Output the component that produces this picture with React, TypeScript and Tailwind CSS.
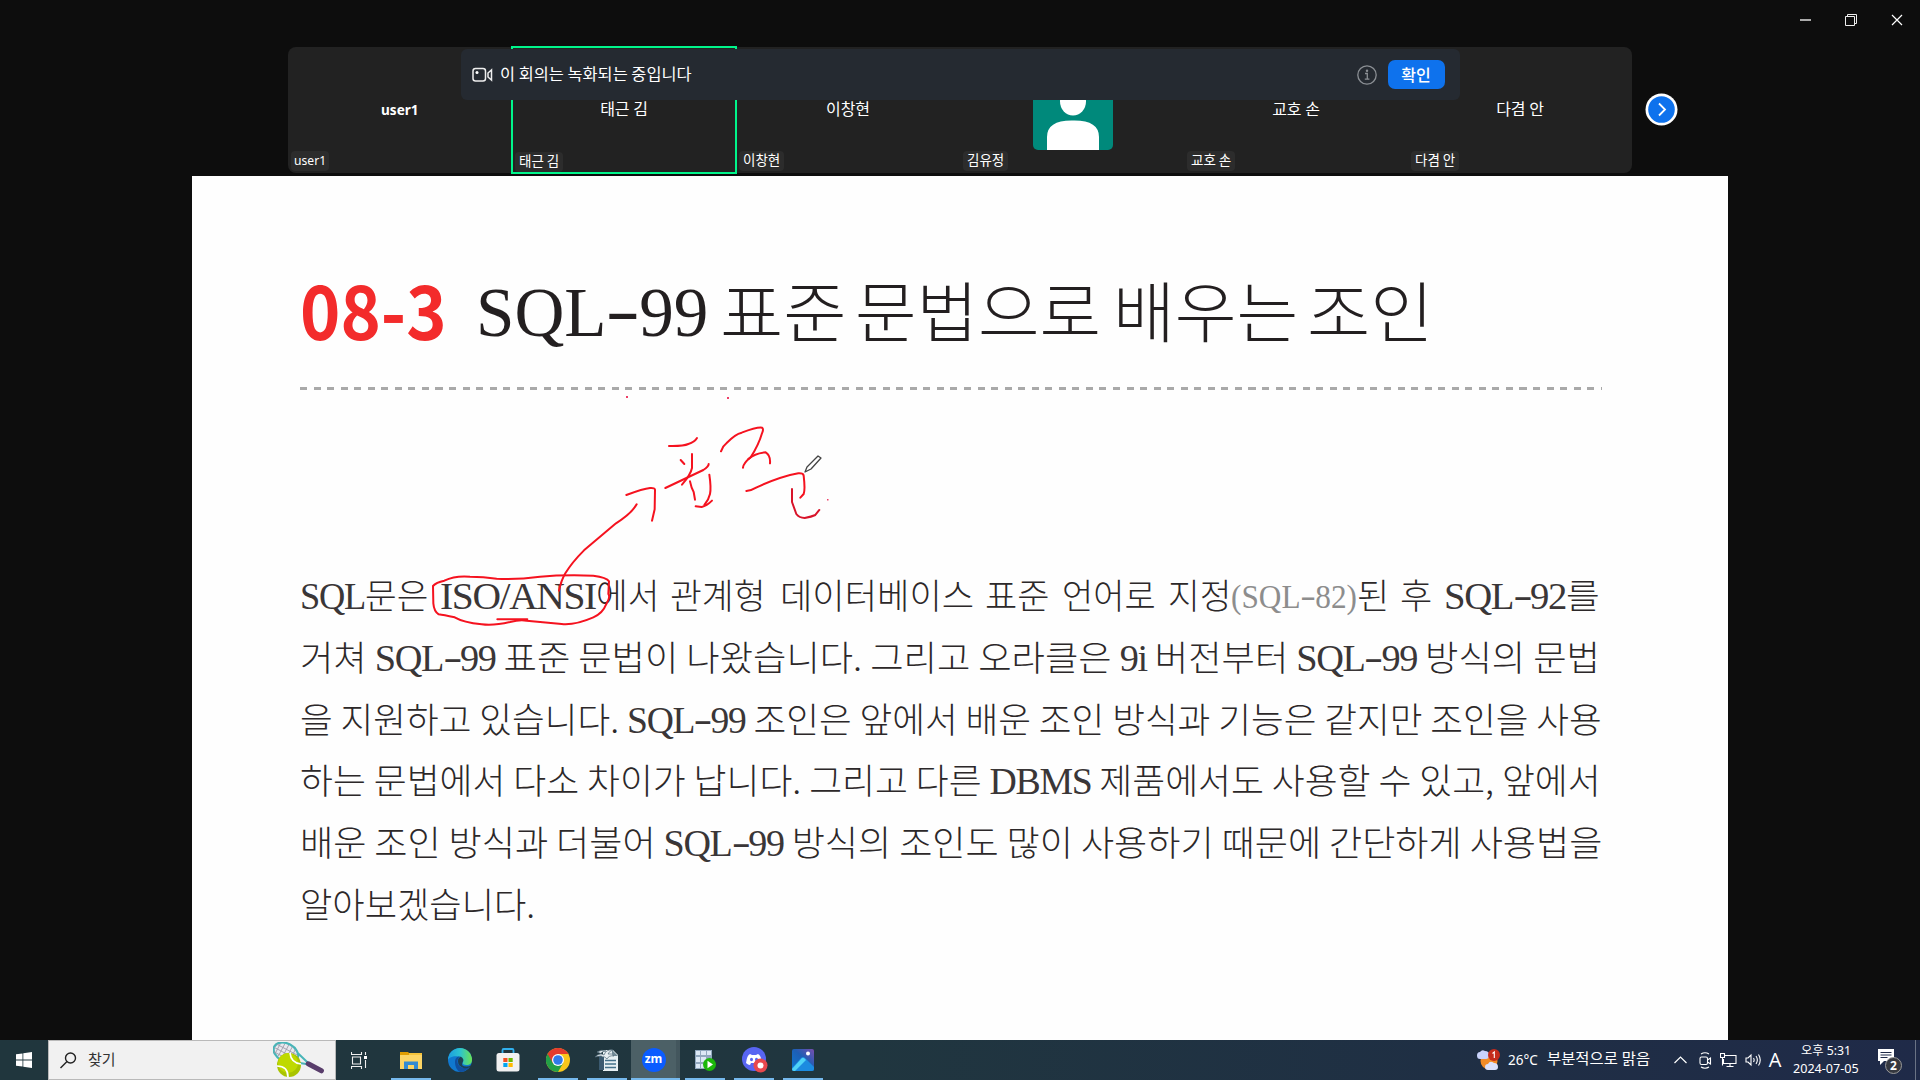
import React, { useLayoutEffect, useRef, useState } from "react";

/* Text stretched or squeezed horizontally to an exact width. */
function Fit({ width, className = "", children }: { width: number; className?: string; children: React.ReactNode }) {
  const ref = useRef<HTMLSpanElement>(null);
  const [k, setK] = useState(1);
  useLayoutEffect(() => {
    if (ref.current) setK(width / ref.current.offsetWidth);
  }, [width]);
  return (
    <span className={`block shrink-0 whitespace-pre ${className}`} style={{ width }}>
      <span ref={ref} className="inline-block origin-left whitespace-pre" style={{ transform: `scaleX(${k})` }}>
        {children}
      </span>
    </span>
  );
}

/* Book text: Latin runs are set in a serif face, Hangul in a light face. */
function Mixed({ text, latin }: { text: string; latin: string }) {
  return (
    <>
      {text.split(/([A-Za-z0-9/()]+|-)/).map((p, i) =>
        p === "-" ? (
          <span key={i} className={`${latin} mx-[0.07em] inline-block -translate-y-[0.04em] scale-x-150`}>-</span>
        ) : /[A-Za-z0-9/()]/.test(p) ? (
          <span key={i} className={latin}>{p}</span>
        ) : (
          <span key={i}>{p}</span>
        )
      )}
    </>
  );
}

const LATIN_BODY = "font-['Liberation_Serif'] text-[37px] font-normal leading-none tracking-[-0.035em] text-[#3a3637]";
const LATIN_TITLE = "font-['Liberation_Serif'] text-[70px] font-normal leading-none";

type Piece = { t: string; w: number; g?: number; c?: boolean };
const LINES: Piece[][] = [
  [
    { t: "SQL문은", w: 128, g: 12 }, { t: "ISO/ANSI", w: 156 }, { t: "에서", w: 63, g: 11 }, { t: "관계형", w: 96, g: 14 },
    { t: "데이터베이스", w: 194, g: 11 }, { t: "표준", w: 64, g: 13 }, { t: "언어로", w: 94, g: 12 }, { t: "지정", w: 63 },
    { t: "(SQL-82)", w: 126, c: true }, { t: "된", w: 32, g: 11 }, { t: "후", w: 32, g: 12 }, { t: "SQL-92를", w: 156 },
  ],
  [{ t: "거쳐 SQL-99 표준 문법이 나왔습니다. 그리고 오라클은 9i 버전부터 SQL-99 방식의 문법", w: 1300 }],
  [{ t: "을 지원하고 있습니다. SQL-99 조인은 앞에서 배운 조인 방식과 기능은 같지만 조인을 사용", w: 1302 }],
  [{ t: "하는 문법에서 다소 차이가 납니다. 그리고 다른 DBMS 제품에서도 사용할 수 있고, 앞에서", w: 1301 }],
  [{ t: "배운 조인 방식과 더불어 SQL-99 방식의 조인도 많이 사용하기 때문에 간단하게 사용법을", w: 1302 }],
  [{ t: "알아보겠습니다.", w: 235 }],
];

function Slide() {
  return (
    <main className="relative mx-auto h-[864px] w-[1536px] bg-[#fefefe] text-[#231f20]">
      <div className="ml-[108px] w-[1302px] pt-[82px] font-['Noto_Sans_CJK_KR',sans-serif]">
        <h1 className="flex h-[100px] items-center font-light">
          <Fit width={147} className="mr-[29px] text-[75px] leading-[100px] font-bold text-[#f32b2b]">08-3</Fit>
          <Fit width={232} className="mr-[12px] text-[65px] leading-[100px]"><Mixed text="SQL-99" latin={LATIN_TITLE} /></Fit>
          <Fit width={126} className="mr-[9px] text-[66px] leading-[100px]">표준</Fit>
          <Fit width={246} className="mr-[12px] text-[66px] leading-[100px]">문법으로</Fit>
          <Fit width={185} className="mr-[9px] text-[66px] leading-[100px]">배우는</Fit>
          <Fit width={126} className="text-[66px] leading-[100px]">조인</Fit>
        </h1>
        <div className="mt-[29px] h-[3px] bg-[repeating-linear-gradient(90deg,#a9a9a9_0_7px,transparent_7px_13.55px)]" />
        <div className="mt-[173px] font-light text-[#2c2829]">
          {LINES.map((line, i) => (
            <p key={i} className="flex h-[61.7px] items-center">
              {line.map((p, j) => (
                <React.Fragment key={j}>
                  <Fit width={p.w} className={p.c ? "text-[34px] leading-[61px] text-[#8d8d8d]" : "text-[35px] leading-[61px]"}>
                    <Mixed text={p.t} latin={p.c ? "font-['Liberation_Serif'] text-[34px] font-normal leading-none" : LATIN_BODY} />
                  </Fit>
                  {p.g ? <span style={{ width: p.g }} className="shrink-0" /> : null}
                </React.Fragment>
              ))}
            </p>
          ))}
        </div>
      </div>
      <Ink />
    </main>
  );
}

/* Handwritten pen marks over the slide. */
function Ink() {
  return (
    <svg className="absolute inset-0" width="1536" height="864" viewBox="192 176 1536 864" fill="none" strokeLinecap="round" strokeLinejoin="round">
      <g transform="translate(580 380) scale(.33333)" stroke="#f5121f" strokeWidth="6">
        <path d="M139 345Q190 326 210 324Q226 323 225 330L224 388L216 422" />
        <path d="M267 198Q310 199 325 192Q344 186 351 174" />
        <path d="M302 240L313 252M336 222V264Q332 284 306 314" />
        <path d="M256 324L370 270Q386 260 386 252" />
        <path d="M330 304Q334 324 341 336L345 359M388 284Q394 325 390 342Q386 360 373 375M396 362Q380 378 365 381L347 379" />
        <path d="M423 214Q428 198 440 189Q466 162 485 158Q530 141 546 143Q552 147 546 160Q536 195 512 232Q490 250 489 263" />
        <path d="M505 237Q525 220 557 217Q572 226 570 250" />
        <path d="M499 333Q515 331 530 322Q600 290 655 280Q670 279 671 287Q676 330 671 342L661 353" />
        <path d="M636 327V366L649 402Q658 414 674 414Q695 410 706 405L718 390" stroke="#d8142a" />
      </g>
      <g transform="translate(420 480) scale(.33333)" stroke="#f5121f" strokeWidth="6">
        <path d="M417 332Q424 300 436 280Q455 248 492 211L588 130Q635 100 650 73" />
        <path d="M39 318Q48 307 73 302Q105 286 150 290Q190 290 230 296Q290 299 360 290Q430 284 520 287Q560 292 567 304L565 342Q572 350 558 374Q548 400 520 412Q465 436 425 432L320 422Q300 418 270 426Q220 438 185 433Q130 427 104 412Q70 405 56 403Q42 394 40 370Z" />
        <path d="M232 418H322" />
      </g>
      <g fill="#ee3f67">
        <rect x="626" y="396" width="2" height="2" /><rect x="727" y="397" width="2" height="2" /><rect x="827" y="499" width="1.500" height="1.500" />
      </g>
      <path d="M805 472l2-5 11-11 3 2-10 11z" fill="#fff" stroke="#444" strokeWidth="1.3" />
    </svg>
  );
}

function Tile({ name, latin, active, avatar }: { name: string; latin?: boolean; active?: boolean; avatar?: boolean }) {
  return (
    <div className={active ? "relative flex h-[128px] w-[226px] -mx-px items-center justify-center border-2 border-[#00f58b]" : "relative flex h-[126px] w-[224px] items-center justify-center"}>
      {avatar ? (
        <svg className="ml-px" width="80" height="80" viewBox="0 0 80 80">
          <rect width="80" height="80" rx="5" fill="#00897b" />
          <ellipse cx="40" cy="31.500" rx="13" ry="14" fill="#fff" />
          <path d="M14 80V67Q14 50 40 50.500Q66 50 66 67V80Z" fill="#fff" />
        </svg>
      ) : latin ? (
        <Fit width={38} className="pb-px font-['Noto_Sans'] text-[15px] font-bold">{name}</Fit>
      ) : (
        <span className="pb-[5px] text-[16px]">{name}</span>
      )}
      <span className={`absolute flex h-5 items-center rounded bg-[#2c2c2c] text-white ${active ? "bottom-0 left-0.5" : "bottom-0.5 left-[3px]"} ${latin ? "px-[3px] font-['Noto_Sans'] text-[12.500px]" : "px-1 pb-1 text-[13.500px]"}`}>
        {latin ? <Fit width={32}>{name}</Fit> : name}
      </span>
    </div>
  );
}

function Gallery() {
  return (
    <section className="relative mx-auto mt-[47px] flex h-[129px] w-[1344px] items-start">
      <div className="flex h-[126px] w-[1344px] items-center rounded-lg bg-[#222222]">
        <Tile name="user1" latin />
        <Tile name="태근 김" active />
        <Tile name="이창현" />
        <Tile name="김유정" avatar />
        <Tile name="교호 손" />
        <Tile name="다겸 안" />
      </div>
      <div className="absolute top-0.5 left-[173px] flex h-[51px] w-[999px] items-center rounded-md bg-[#252a31] pr-[15px] pl-[11px]">
        <svg width="21" height="16" viewBox="0 0 21 16" fill="none" stroke="#eee" strokeWidth="1.5">
          <rect x="1" y="1.500" width="12.500" height="12.500" rx="2.500" /><path d="M16 6l3.500-3v10L16 10z" /><circle cx="5" cy="5.500" r="1.500" fill="#fff" stroke="none" />
        </svg>
        <Fit width={192} className="ml-[7px] pb-1 text-[15.500px] leading-5">이 회의는 녹화되는 중입니다</Fit>
        <svg className="mr-[11px] ml-auto" width="20" height="20" viewBox="0 0 20 20" fill="none" stroke="#8b8f94" strokeWidth="1.3">
          <circle cx="10" cy="10" r="9.200" /><path d="M8 8.500h2.300V14M7.800 14.200h4.600" /><circle cx="10" cy="5.700" r=".6" />
        </svg>
        <button className="flex h-[29px] w-[57px] items-center justify-center rounded-[7px] bg-[#0e72ed] pr-px pb-px text-[16px] font-medium">확인</button>
      </div>
      <svg className="absolute top-[46px] left-[1357px]" width="33" height="33" viewBox="0 0 33 33">
        <circle cx="16.500" cy="16.500" r="16" fill="#fff" /><circle cx="16.500" cy="16.500" r="13.300" fill="#0e72ed" />
        <path d="M14 10.500l6 6-6 6" fill="none" stroke="#fff" strokeWidth="1.800" />
      </svg>
    </section>
  );
}

function WindowControls() {
  return (
    <div className="absolute top-[12px] right-[16px] flex items-center gap-[32px]">
      <svg width="13" height="16" viewBox="0 0 13 16"><path d="M1 8h11" stroke="#aaa" strokeWidth="2" /></svg>
      <svg width="14" height="16" viewBox="0 0 14 16" fill="none" stroke="#eee"><path d="M1.500 4.500h9v9h-9zM3.500 4.500v-2h9v9h-2" /></svg>
      <svg width="14" height="16" viewBox="0 0 14 16"><path d="M2 3l10 10M12 3L2 13" stroke="#fff" strokeWidth="1.200" /></svg>
    </div>
  );
}

function Slot({ children, open, active }: { children: React.ReactNode; open?: boolean; active?: boolean }) {
  return (
    <div className={`relative flex h-full items-center justify-center ${active ? "w-[49px] bg-[#4c6066] shadow-[inset_-4px_0_#43565d]" : "w-[49px]"}`}>
      {children}
      {open && <span className={`absolute bottom-0 h-0.5 bg-[#76b9ed] ${active ? "inset-x-0" : "inset-x-[4.500px]"}`} />}
    </div>
  );
}

function Tennis() {
  return (
    <svg width="54" height="36" viewBox="0 0 54 36">
      <g transform="rotate(28 12 10)">
        <ellipse cx="13" cy="10" rx="13" ry="9" fill="#e9e8ee" stroke="#48b5b8" strokeWidth="2.200" />
        <path d="M4 5v10M8 3v14M12 2v16M16 2v16M20 3v14M1 7h24M0 11h26M2 15h21" stroke="#9c9ba8" strokeWidth=".8" />
        <path d="M24 5l14 4M24 15l14-5" stroke="#48b5b8" strokeWidth="2" fill="none" />
        <path d="M38 9.500h15" stroke="#593d6b" strokeWidth="5" strokeLinecap="round" />
      </g>
      <circle cx="16" cy="23" r="12" fill="#a9c400" />
      <circle cx="15" cy="21" r="10" fill="#bfd900" />
      <path d="M17 11q1 10 11 11M4 24q11 0 11 11" fill="none" stroke="#fff" strokeWidth="1.700" />
    </svg>
  );
}

function Taskbar() {
  return (
    <footer className="flex h-10 items-center bg-[linear-gradient(90deg,#20363d_0%,#20363f_45%,#1f2f44_75%,#1f2a48_100%)] font-['Noto_Sans','Noto_Sans_CJK_KR',sans-serif] text-white">
      <div className="flex h-full w-12 items-center justify-center">
        <svg width="16" height="16" viewBox="0 0 16 16" fill="#fff"><path d="M0 2.300L6.500 1.400V7.600H0zM7.300 1.300L16 0V7.600H7.300zM0 8.400h6.500v6.200L0 13.700zM7.300 8.400H16V16l-8.700-1.300z" /></svg>
      </div>
      <div className="flex h-full w-[288px] items-center border border-[#b9b9b9] bg-[#f1f1f1] pr-[8px] pl-[11px] text-[#333]">
        <svg width="17" height="17" viewBox="0 0 17 17" fill="none" stroke="#222" strokeWidth="1.400"><circle cx="10.500" cy="6" r="5" /><path d="M7 9.500L.5 16" /></svg>
        <span className="ml-[11px] pb-0.5 text-[15px]">찾기</span>
        <span className="ml-auto"><Tennis /></span>
      </div>
      <div className="flex h-full w-[50px] items-center justify-center pr-1">
        <svg width="17" height="17" viewBox="0 0 17 17" fill="none" stroke="#eee" strokeWidth="1.100"><path d="M.5 0v2.500h10V0M1.500 5h8v7h-8zM.5 17v-2.500h10V17M14.500 0v3M14.500 8v8" /><path d="M13 4h3v3h-3z" fill="#fff" stroke="none" /></svg>
      </div>
      <Slot open>
        <svg width="22" height="19" viewBox="0 0 22 19"><path d="M0 1h8l2 2v5H0z" fill="#e09d00" /><path d="M9 2h13v5H9z" fill="#f5c33b" /><path d="M0 4h22v14H0z" fill="#fcd565" /><path d="M4 10.500h14V18h-4v-4H8v4H4z" fill="#338bd2" /></svg>
      </Slot>
      <Slot>
        <svg width="24" height="24" viewBox="0 0 24 24">
          <defs>
            <linearGradient id="eg" x1="0" x2="1"><stop offset="0" stopColor="#1b9de0" /><stop offset=".5" stopColor="#2cc3d0" /><stop offset="1" stopColor="#6be354" /></linearGradient>
          </defs>
          <circle cx="12" cy="12" r="12" fill="#1078cf" />
          <path d="M0 12A12 12 0 0 1 24 12c0 3-2 5-5.500 5-3 0-4.500-1-3.600-2.500C16.500 11.500 13.500 8.500 10 8.500 5.500 7.500 1 9.500 0 12z" fill="url(#eg)" />
          <path d="M7 14c0-3.500 2-5.500 5-5.500-2 1-2.500 3-2.500 5 0 4 3.500 6.500 7.500 6.500 2 0 3.500-.5 5-1.500C19.500 22 16 24 12 24c-3-1.500-5-5.500-5-10z" fill="#104f9f" />
          <path d="M14.500 14.500q-2 4 4 4 3 0 4.500-1.500l-1 2q-3 2-6.500 1Q10 18 10 13.500q0-3.500 2.500-5Q17 11 14.500 14.500z" fill="#20363f" opacity=".85" />
        </svg>
      </Slot>
      <Slot>
        <svg className="-translate-x-px" width="24" height="24" viewBox="0 0 24 24"><path d="M6.500 7V2.200Q6.500 1 7.700 1h8.600q1.200 0 1.200 1.200V7" fill="none" stroke="#31b0ee" strokeWidth="1.800" /><rect x=".5" y="5" width="23" height="18.500" rx="2.500" fill="#f1f1f1" /><path d="M7.300 10h4.200v4H7.300z" fill="#f25022" /><path d="M12.500 10h4.200v4h-4.200z" fill="#6db900" /><path d="M7.300 15h4.200v4H7.300z" fill="#00a4ef" /><path d="M12.500 15h4.200v4h-4.200z" fill="#ffb900" /></svg>
      </Slot>
      <Slot open>
        <svg width="24" height="24" viewBox="0 0 24 24"><circle cx="12" cy="12" r="12" fill="#f8c61c" /><path d="M12 12L1.600 6A12 12 0 0 0 12 24l5.200-9z" fill="#23a047" /><path d="M1.600 6A12 12 0 0 1 22.400 6H12v6l-5.200 3z" fill="#e33b2e" /><circle cx="12" cy="12" r="6" fill="#fff" /><circle cx="12" cy="12" r="4.800" fill="#2f7bea" /></svg>
      </Slot>
      <Slot open>
        <svg width="24" height="24" viewBox="0 0 24 24"><path d="M4 7h10v15H4z" fill="#284356" /><path d="M8 2h10l5 5v16H8z" fill="#e7f0f3" /><path d="M4 8h5v14H4z" fill="#3b5a70" /><path d="M17 2l6 6h-6z" fill="#6f8894" /><path d="M10 12.500h11M10 16h11M10 19.500h11" stroke="#44718a" strokeWidth="1.300" /><path d="M0 9Q5 4 9 7q2-6 9-5-4 1-5 4 4-1 6 2-5-1-7 3-2-3-5-2 1-2-7 0zM2 4q5-3 9-1Q7 3 6 5.500z" fill="#e7eef2" stroke="#4a6472" strokeWidth=".7" /></svg>
      </Slot>
      <Slot open active>
        <span className="mr-1 flex size-6 items-center justify-center rounded-full bg-[#0b5cff] pb-0.5 font-['Open_Sans'] text-[12px] leading-none font-bold">zm</span>
      </Slot>
      <Slot open>
        <svg width="22" height="22" viewBox="0 0 22 22"><path d="M1 1h17v19H1z" fill="#91a7be" /><path d="M2 2h4v4H2zM7 2h5v4H7zM13 2h4v4h-4zM2 8h4v5H2zM7 8h5v5H7zM2 15h4v4H2zM7 15h5v4H7z" fill="#dce8f5" /><circle cx="15.500" cy="15.500" r="6.500" fill="#1bb70a" /><path d="M13.500 11.800l5.500 3.700-5.500 3.700z" fill="#fff" /></svg>
      </Slot>
      <Slot open>
        <svg className="translate-x-px" width="26" height="26" viewBox="0 0 26 26"><circle cx="12" cy="12" r="12" fill="#5865f2" /><path d="M8 7l2 1h4l2-1q3 1 4 9-2 2-4 2l-1-2H9l-1 2q-2 0-4-2Q5 8 8 7z" fill="#fff" /><ellipse cx="9.500" cy="12.500" rx="1.500" ry="1.800" fill="#5865f2" /><ellipse cx="14.500" cy="12.500" rx="1.500" ry="1.800" fill="#5865f2" /><circle cx="18.500" cy="18.500" r="7" fill="#e8484d" /><circle cx="18.500" cy="18.500" r="3" fill="#fff" /></svg>
      </Slot>
      <Slot open>
        <svg width="22" height="22" viewBox="0 0 22 22">
          <defs>
            <linearGradient id="pg" x1="0" y1="1" x2="1" y2="0"><stop offset="0" stopColor="#0d78d2" /><stop offset=".55" stopColor="#1d5eb5" /><stop offset="1" stopColor="#7a4eae" /></linearGradient>
            <clipPath id="pc"><rect width="22" height="22" rx="2" /></clipPath>
          </defs>
          <g clipPath="url(#pc)"><rect width="22" height="22" fill="url(#pg)" /><path d="M-1 20L9 9q2-2 4 0l10 10v4H-1z" fill="#1c8be0" /><path d="M0 20L9.500 9.500q1.500-1.500 3 0l1.500 1.500L3 22H0z" fill="#4fd3f7" /></g>
          <circle cx="16" cy="4.500" r="2" fill="#fff" />
        </svg>
      </Slot>
      <div className="ml-auto flex h-full items-center">
        <svg width="24" height="22" viewBox="0 0 24 22"><circle cx="12" cy="12" r="8.500" fill="#f28c28" /><path d="M3 10q-3 0-3-3.500T3 3q2-3 5-1 4 0 4 4t-3 4z" fill="#c9d3fb" /><path d="M11 21q-3 0-3-3t3-3q2-4 6-1 4 0 4 4 0 3-3 3z" fill="#dbe2fd" /><circle cx="17" cy="6" r="6" fill="#c42b1c" /><path d="M15.500 4.500L17.300 3v6" fill="none" stroke="#fff" strokeWidth="1.100" /></svg>
        <Fit width={30} className="ml-[7px] pb-px text-[14px]">26°C</Fit>
        <Fit width={103} className="ml-[9px] pb-0.5 text-[14.500px]">부분적으로 맑음</Fit>
        <svg className="ml-[24px]" width="13" height="8" viewBox="0 0 13 8" fill="none" stroke="#fff" strokeWidth="1.200"><path d="M.5 7l6-6 6 6" /></svg>
        <svg className="ml-[12px]" width="13" height="17" viewBox="0 0 13 17" fill="none" stroke="#fff" strokeWidth="1.100"><rect x="1" y="5" width="7.500" height="7.500" rx="1.500" /><path d="M8.500 8l3-2v6l-3-2M2 2q4-2.500 8 0M2 15q4 2.500 8 0" /></svg>
        <svg className="ml-[8px]" width="17" height="15" viewBox="0 0 17 15" fill="none" stroke="#fff" strokeWidth="1.100"><path d="M5 2.500h11v8H3.500V6M10 10.500v3M6.500 13.500h7M.5.5h4v4h-4zM2.500 4.500v8" /></svg>
        <svg className="ml-[8px]" width="17" height="14" viewBox="0 0 17 14" fill="none" stroke="#fff" strokeWidth="1.100"><path d="M1 5h2l3-3v10L3 9H1zM8.500 5q1.300 2 0 4M11 3q2.700 4 0 8M13.500 1.500q3.500 5.500 0 11" /></svg>
        <span className="ml-[6px] w-[14px] text-center font-['Open_Sans'] text-[20px] leading-none">A</span>
        <div className="ml-[11px] flex w-[66px] flex-col items-center text-[12px] leading-[18px]">
          <Fit width={50}>오후 5:31</Fit>
          <Fit width={66}>2024-07-05</Fit>
        </div>
        <svg className="ml-[18px]" width="26" height="28" viewBox="0 0 26 28"><path d="M1 3h16v12H7l-4 4v-4H1z" fill="#fff" /><path d="M3.500 6.500h11M3.500 9h11M3.500 11.500h7" stroke="#1f2a48" strokeWidth="1" /><circle cx="16.500" cy="19.500" r="8" fill="#35383f" stroke="#9a9a9a" /><text x="16.500" y="24" textAnchor="middle" fill="#fff" fontSize="12" fontWeight="700" fontFamily="Noto Sans">2</text></svg>
        <span className="ml-[12px] h-full w-px bg-[#6a7385]" /><span className="w-1" />
      </div>
    </footer>
  );
}

export default function App() {
  return (
    <div className="relative flex h-[1080px] w-[1920px] flex-col overflow-hidden bg-[#0d0d0d] font-['Noto_Sans_CJK_KR',sans-serif] text-white">
      <WindowControls />
      <Gallery />
      <Slide />
      <Taskbar />
    </div>
  );
}
